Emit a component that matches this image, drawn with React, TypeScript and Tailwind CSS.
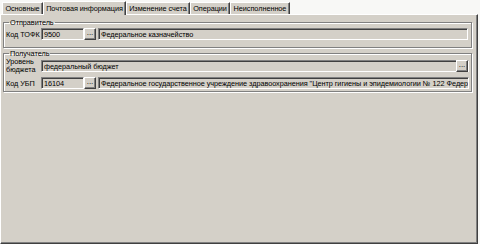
import React from "react";

const sunken =
  "border border-t-[#808080] border-l-[#808080] border-r-white border-b-white shadow-[inset_1px_1px_0_#404040,inset_-1px_-1px_0_#d4d0c8] bg-[#d4d0c8]";

function Dots() {
  return (
    <div className="w-[12px] h-[12px] shrink-0 flex items-center justify-center border border-t-white border-l-white border-r-[#404040] border-b-[#404040] shadow-[inset_-1px_-1px_0_#808080] bg-[#d4d0c8] text-[8px] leading-none pb-[3px]">
      ...
    </div>
  );
}

function Tab({ label, w, active }: { label: string; w: string; active?: boolean }) {
  if (active) {
    return (
      <div
        className={`${w} h-[14px] -mb-px z-10 flex items-center justify-center bg-[#d4d0c8] border-t border-l border-t-white border-l-white border-r border-r-[#404040] shadow-[inset_-1px_0_0_#808080] whitespace-nowrap`}
      >
        {label}
      </div>
    );
  }
  return (
    <div
      className={`${w} h-[12px] flex items-center justify-center bg-[#d4d0c8] border-t border-l border-t-white border-l-white border-r border-r-[#404040] shadow-[inset_-1px_0_0_#808080] whitespace-nowrap`}
    >
      {label}
    </div>
  );
}

export default function App() {
  return (
    <div className="w-[480px] h-[244px] bg-[#f8f8f6] flex flex-col font-['Liberation_Sans',Arial,sans-serif] text-[7.3px] tracking-[-0.05px] leading-[9px] text-black overflow-hidden">
      <div className="flex items-end h-[14px] pl-[2px] shrink-0">
        <Tab label="Основные" w="w-[41px]" />
        <Tab label="Почтовая информация" w="w-[83px]" active />
        <Tab label="Изменение счета" w="w-[64px]" />
        <Tab label="Операции" w="w-[40px]" />
        <Tab label="Неисполненное" w="w-[60px]" />
      </div>
      <div className="flex-1 min-w-0 mr-[2px] bg-[#d4d0c8] border border-t-white border-l-white border-r-[#404040] border-b-[#404040] shadow-[inset_-1px_-1px_0_#808080] px-[2px] pt-[3px]">
        <fieldset className="min-w-0 mr-[3px] border border-[#808080] shadow-[1px_1px_0_#fff,inset_1px_1px_0_#fff] pl-[2px] pr-[3px] pb-[7px] pt-[1px]">
          <legend className="ml-[3px] px-[1px]">Отправитель</legend>
          <div className="flex items-center h-[12px]">
            <div className="w-[35px] shrink-0 whitespace-nowrap">Код ТОФК</div>
            <div className={`${sunken} w-[43px] h-[12px] shrink-0 flex items-center pl-[2px]`}>9500</div>
            <Dots />
            <div className={`${sunken} flex-1 min-w-0 ml-[2px] h-[12px] flex items-center pl-[2px]`}>Федеральное казначейство</div>
          </div>
        </fieldset>
        <fieldset className="min-w-0 mr-[3px] mt-[1px] border border-[#808080] shadow-[1px_1px_0_#fff,inset_1px_1px_0_#fff] pl-[2px] pr-[2px] pb-[2px] pt-0">
          <legend className="ml-[3px] px-[1px]">Получатель</legend>
          <div className="flex items-center h-[16px]">
            <div className="w-[35px] shrink-0 leading-[8px]">
              Уровень
              <br />
              бюджета
            </div>
            <div className={`${sunken} flex-1 min-w-0 h-[12px] flex items-center pl-[2px] justify-between`}>
              <span>федеральный бюджет</span>
              <Dots />
            </div>
          </div>
          <div className="flex items-center h-[12px] mt-[3px]">
            <div className="w-[35px] shrink-0 whitespace-nowrap">Код УБП</div>
            <div className={`${sunken} w-[43px] h-[12px] shrink-0 flex items-center pl-[2px]`}>16104</div>
            <Dots />
            <div className={`${sunken} flex-1 min-w-0 ml-[2px] h-[12px] flex items-center pl-[2px] overflow-hidden whitespace-nowrap`}>
              Федеральное государственное учреждение здравоохранения "Центр гигиены и эпидемиологии № 122 Федер
            </div>
          </div>
        </fieldset>
      </div>
    </div>
  );
}
